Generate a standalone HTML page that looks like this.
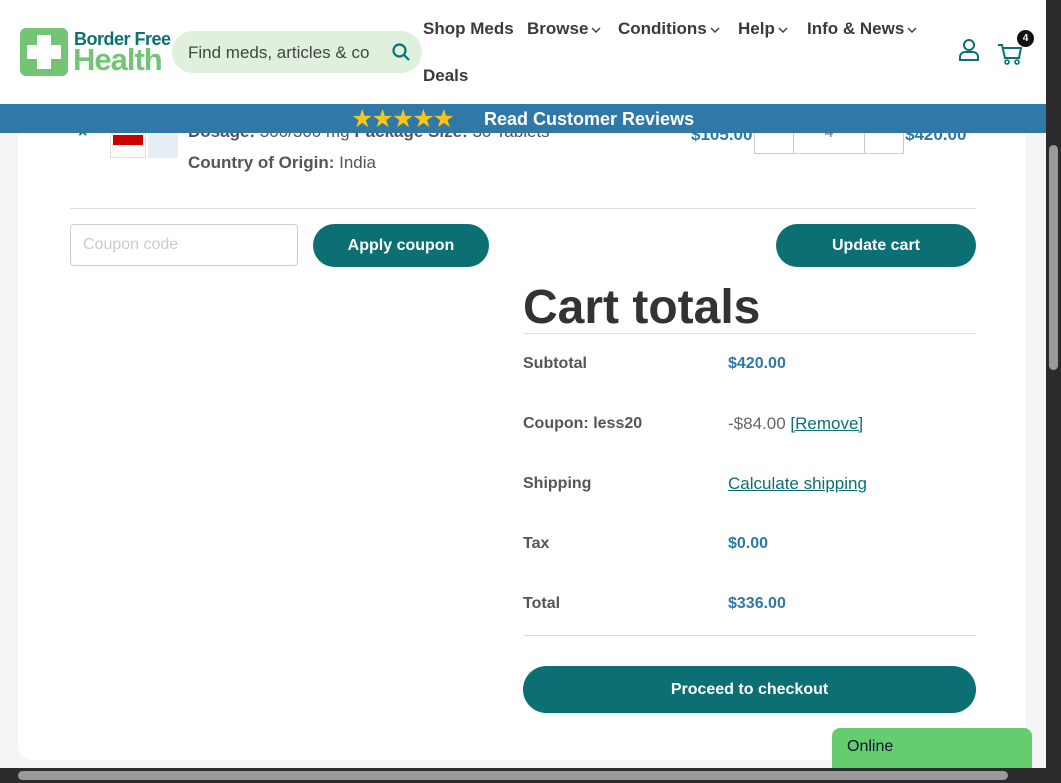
<!DOCTYPE html>
<html><head><style>
*{margin:0;padding:0;box-sizing:border-box}
body{width:1061px;height:783px;overflow:hidden;background:#f5f5f5;font-family:"Liberation Sans",sans-serif;position:relative;color:#444}
.card{position:absolute;left:18px;top:0;width:1008px;height:760px;background:#fff;border-radius:0 0 14px 14px}
.abs{position:absolute}
.b{font-weight:bold}
.hdr{position:absolute;left:0;top:0;width:1046px;height:104px;background:#fff}
.nav{font-size:17px;font-weight:bold;color:#3a3a3a}
.nav svg{margin-left:3px;vertical-align:middle}
.bar{position:absolute;left:0;top:104px;width:1046px;height:29px;background:#2f78a8}
.btn{position:absolute;background:#0b6f73;color:#fff;font-weight:bold;font-size:16px;border-radius:22px;text-align:center}
.lbl{position:absolute;left:523px;font-size:16px;font-weight:bold;color:#555}
.val{position:absolute;left:728px;font-size:16px;font-weight:bold;color:#2f78a8}
</style></head><body>
<div class="card"></div>
<div class="abs" style="left:188px;top:122px;font-size:17px;color:#555"><b>Dosage:</b> 300/300 mg <b>Package Size:</b> 30 Tablets</div>
<div class="abs b" style="left:78px;top:124px;color:#0b6f73;font-size:16px">×</div>
<div class="abs" style="left:110px;top:128px;width:36px;height:30px;background:#fff;border:1px solid #ddd"><div style="margin:6px 2px;height:10px;background:#c00"></div></div>
<div class="abs" style="left:148px;top:128px;width:30px;height:30px;background:#e8eef5"></div>
<div class="abs" style="left:188px;top:153px;font-size:17px;color:#555"><b>Country of Origin:</b> India</div>
<div class="abs b" style="left:691px;top:125px;font-size:17px;color:#2f78a8">$105.00</div>
<div class="abs" style="left:754px;top:114px;width:150px;height:40px;border:1px solid #ccc"></div>
<div class="abs" style="left:793px;top:114px;width:72px;height:40px;border-left:1px solid #ccc;border-right:1px solid #ccc;text-align:center;padding-top:10px;color:#777">4</div>
<div class="abs b" style="left:905px;top:125px;font-size:17px;color:#2f78a8">$420.00</div>
<div class="abs" style="left:70px;top:208px;width:906px;height:1px;background:#ddd"></div>
<div class="abs" style="left:70px;top:224px;width:228px;height:42px;border:1px solid #ccc;border-radius:4px;padding:11px 12px;color:#ccc;font-size:16px">Coupon code</div>
<div class="btn" style="left:313px;top:224px;width:176px;height:43px;line-height:43px">Apply coupon</div>
<div class="btn" style="left:776px;top:224px;width:200px;height:43px;line-height:43px">Update cart</div>
<div class="abs b" style="left:523px;top:280px;font-size:48px;color:#333">Cart totals</div>
<div class="abs" style="left:523px;top:333px;width:453px;height:1px;background:#ddd"></div>
<div class="lbl" style="top:355px">Subtotal</div><div class="val" style="top:355px">$420.00</div>
<div class="lbl" style="top:415px">Coupon: less20</div><div class="abs" style="left:728px;top:414px;font-size:17px;color:#666">-$84.00 <span style="color:#0b6f73;text-decoration:underline">[Remove]</span></div>
<div class="lbl" style="top:475px">Shipping</div><div class="abs" style="left:728px;top:474px;font-size:17px;color:#0b6f73;text-decoration:underline">Calculate shipping</div>
<div class="lbl" style="top:535px">Tax</div><div class="val" style="top:535px">$0.00</div>
<div class="lbl" style="top:595px">Total</div><div class="val" style="top:595px">$336.00</div>
<div class="abs" style="left:523px;top:635px;width:453px;height:1px;background:#ddd"></div>
<div class="btn" style="left:523px;top:666px;width:453px;height:47px;line-height:47px;border-radius:24px">Proceed to checkout</div>
<div class="abs" style="left:832px;top:728px;width:200px;height:45px;background:#66cc70;border-radius:8px 8px 0 0;padding:10px 15px;font-size:16px;color:#113">Online</div>
<div class="hdr">
<div class="abs" style="left:20px;top:28px;width:48px;height:48px;background:#74c476;border-radius:6px">
<div class="abs" style="left:17px;top:7px;width:14px;height:34px;background:#fff"></div>
<div class="abs" style="left:7px;top:17px;width:34px;height:14px;background:#fff"></div></div>
<div class="abs b" style="left:74px;top:29px;font-size:18px;color:#0b6f73;letter-spacing:-0.5px">Border Free</div>
<div class="abs b" style="left:73px;top:42px;font-size:31px;color:#74c476;letter-spacing:-1px">Health</div>
<div class="abs" style="left:172px;top:31px;width:250px;height:42px;background:#dff0dc;border-radius:21px;padding:12px 16px;font-size:17px;color:#444">Find meds, articles &amp; co</div>
<svg class="abs" style="left:391px;top:42px" width="20" height="20" viewBox="0 0 20 20"><circle cx="8.5" cy="8.5" r="6" fill="none" stroke="#0b6f73" stroke-width="2.2"/><path d="M13 13l5 5" stroke="#0b6f73" stroke-width="2.2"/></svg>
<div class="abs nav" style="left:423px;top:19px">Shop Meds</div>
<div class="abs nav" style="left:527px;top:19px">Browse<svg width="10" height="6"><path d="M1 1l4 4 4-4" fill="none" stroke="#444" stroke-width="1.5"/></svg></div>
<div class="abs nav" style="left:618px;top:19px">Conditions<svg width="10" height="6"><path d="M1 1l4 4 4-4" fill="none" stroke="#444" stroke-width="1.5"/></svg></div>
<div class="abs nav" style="left:738px;top:19px">Help<svg width="10" height="6"><path d="M1 1l4 4 4-4" fill="none" stroke="#444" stroke-width="1.5"/></svg></div>
<div class="abs nav" style="left:807px;top:19px">Info &amp; News<svg width="10" height="6"><path d="M1 1l4 4 4-4" fill="none" stroke="#444" stroke-width="1.5"/></svg></div>
<div class="abs nav" style="left:423px;top:66px">Deals</div>
<svg class="abs" style="left:958px;top:38px" width="22" height="24" viewBox="0 0 22 24"><circle cx="11" cy="7" r="5" fill="none" stroke="#0b6f73" stroke-width="2"/><path d="M2 22v-3a5 5 0 0 1 5-5h8a5 5 0 0 1 5 5v3z" fill="none" stroke="#0b6f73" stroke-width="2"/></svg>
<svg class="abs" style="left:997px;top:42px" width="26" height="24" viewBox="0 0 26 24"><path d="M1 3h4l3 13h14l2-10H6" fill="none" stroke="#0b6f73" stroke-width="2"/><circle cx="10" cy="20" r="2" fill="none" stroke="#0b6f73" stroke-width="1.6"/><circle cx="20" cy="20" r="2" fill="none" stroke="#0b6f73" stroke-width="1.6"/></svg>
<div class="abs" style="left:1017px;top:30px;width:17px;height:17px;background:#111;border-radius:50%;color:#fff;font-size:10px;font-weight:bold;text-align:center;line-height:17px">4</div>
</div>
<div class="bar"><div class="abs" style="left:351px;top:0px;font-size:25px;color:#f5c518;letter-spacing:-2px">★★★★★</div><div class="abs b" style="left:484px;top:5px;font-size:18px;color:#fff">Read Customer Reviews</div></div>
<div class="abs" style="left:1046px;top:0;width:15px;height:783px;background:#2b2b2b"><div style="position:absolute;left:3px;top:145px;width:9px;height:225px;background:#9a9a9a;border-radius:5px"></div></div>
<div class="abs" style="left:0;top:768px;width:1046px;height:15px;background:#2b2b2b"><div style="position:absolute;left:18px;top:3px;width:990px;height:9px;background:#9a9a9a;border-radius:5px"></div></div>
</body></html>
